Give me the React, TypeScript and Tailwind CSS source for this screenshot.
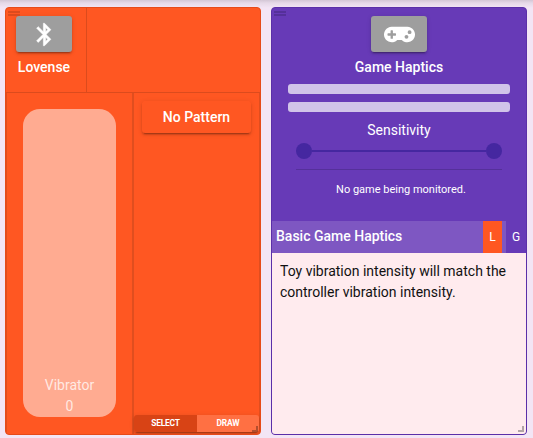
import React from 'react';
import { FaGamepad } from 'react-icons/fa';

const raised = 'shadow-[0_3px_1px_-2px_rgba(0,0,0,0.2),0_2px_2px_0_rgba(0,0,0,0.14),0_1px_5px_0_rgba(0,0,0,0.12)]';

function BluetoothIcon() {
  return (
    <svg viewBox="0 0 24 24" className="size-[27px] fill-white stroke-white stroke-[0.5px]">
      <path d="M17.71 7.71L12 2h-1v7.59L6.41 5 5 6.41 10.59 12 5 17.59 6.41 19 11 14.41V22h1l5.71-5.71-4.3-4.29 4.3-4.29zM13 5.83l1.88 1.88L13 9.59V5.83zm1.88 10.46L13 18.17v-3.76l1.88 1.88z" />
    </svg>
  );
}

function DragHandle({ color }: { color: string }) {
  return (
    <div className="absolute left-[2px] top-[3px] flex w-3 flex-col gap-px">
      <div className={`h-[2px] ${color}`} />
      <div className={`h-[2px] ${color}`} />
    </div>
  );
}

function ResizeHandle() {
  return <div className="absolute bottom-[2px] right-[2px] h-[6px] w-[6px] border-b-2 border-r-2 border-black/30" />;
}

function IconTile({ children }: { children: React.ReactNode }) {
  return (
    <div className={`flex h-9 w-14 items-center justify-center rounded-[3px] bg-[#9e9e9e] text-white ${raised}`}>
      {children}
    </div>
  );
}

function LovensePanel() {
  return (
    <section className="relative flex h-[428px] w-[256px] flex-col overflow-hidden rounded-[4px] border border-[#e64a19] bg-[#ff5722]">
      <DragHandle color="bg-[#dc4b1d]" />
      <header className="flex h-[85px] shrink-0 border-b border-[#dc4b1d]">
        <div className="flex w-[81px] flex-col items-center border-r border-[#dc4b1d] pr-[4px] pt-2">
          <IconTile>
            <BluetoothIcon />
          </IconTile>
          <div className="mt-[5px] text-sm font-medium leading-5">Lovense</div>
        </div>
      </header>
      <div className="flex min-h-0 flex-1">
        <div className="w-[127px] border-x border-[#e04e1f] pl-4 pt-4">
          <div className="flex h-[308px] w-[93px] flex-col items-center justify-end rounded-[17px] bg-[#ffab91] text-sm leading-[21px] text-white/75">
            <span>Vibrator</span>
            <span>0</span>
          </div>
        </div>
        <div className="flex flex-1 flex-col border-x border-[#e04e1f]">
          <div className="pl-[8px] pt-[8px]">
            <div className={`flex h-8 w-[109px] items-center justify-center rounded-[3px] text-sm font-medium ${raised}`}>
              No Pattern
            </div>
          </div>
          <div className={`mb-[2px] mt-auto flex h-[17px] overflow-hidden rounded-[3px] text-center text-[8.4px] font-bold leading-[17px] tracking-[-0.2px] ${raised}`}>
            <div className="w-[63px] bg-[#d84315]">SELECT</div>
            <div className="flex-1 bg-[#ff7043]">DRAW</div>
          </div>
        </div>
      </div>
      <ResizeHandle />
    </section>
  );
}

function GamePanel() {
  return (
    <section className="relative flex h-[428px] w-[256px] flex-col overflow-hidden rounded-[4px] border border-[#5b2fa8] bg-[#673ab7]">
      <DragHandle color="bg-[#55309a]" />
      <div className="flex h-[213px] shrink-0 flex-col items-center pt-2">
        <IconTile>
          <FaGamepad size={31} />
        </IconTile>
        <div className="mt-[5px] text-sm font-medium leading-5">Game Haptics</div>
        <div className="mt-[7px] h-[10px] w-[222px] rounded-[3px] bg-[#d1c4e9]" />
        <div className="mt-2 h-[10px] w-[222px] rounded-[3px] bg-[#d1c4e9]" />
        <div className="mt-2 text-sm leading-5">Sensitivity</div>
        <div className="mt-[3px] flex w-[206px] items-center">
          <div className="size-4 rounded-full bg-[#4527a0]" />
          <div className="h-[2px] flex-1 bg-[#4527a0]" />
          <div className="size-4 rounded-full bg-[#4527a0]" />
        </div>
        <div className="mt-[10px] h-px w-[206px] bg-[#55309a]" />
        <div className="mt-[12px] pl-[4px] text-[11px] leading-4">No game being monitored.</div>
      </div>
      <div className="flex h-8 shrink-0 bg-[#7e57c2] text-sm leading-8">
        <div className="flex-1 pl-[4px] pb-px font-medium leading-[31px]">Basic Game Haptics</div>
        <div className="w-[19px] bg-[#ff5722] text-center text-xs leading-8">L</div>
        <div className="ml-[4px] w-5 bg-[#673ab7] text-center text-xs leading-8">G</div>
      </div>
      <p className="flex-1 bg-[#ffebee] px-2 pt-[8px] text-sm leading-[21px] text-[#111]">
        Toy vibration intensity will match the controller vibration intensity.
      </p>
      <ResizeHandle />
    </section>
  );
}

export default function App() {
  return (
    <main className="h-[438px] w-[533px] overflow-hidden bg-[#f3e5f5] bg-[linear-gradient(to_bottom,#d3c6d5_0px,#e6d9e8_3px,#f3e5f5_8px)] font-[Roboto,sans-serif] text-white">
      <div className="flex gap-[10px] pl-[5px] pt-[7px]">
        <LovensePanel />
        <GamePanel />
      </div>
    </main>
  );
}
